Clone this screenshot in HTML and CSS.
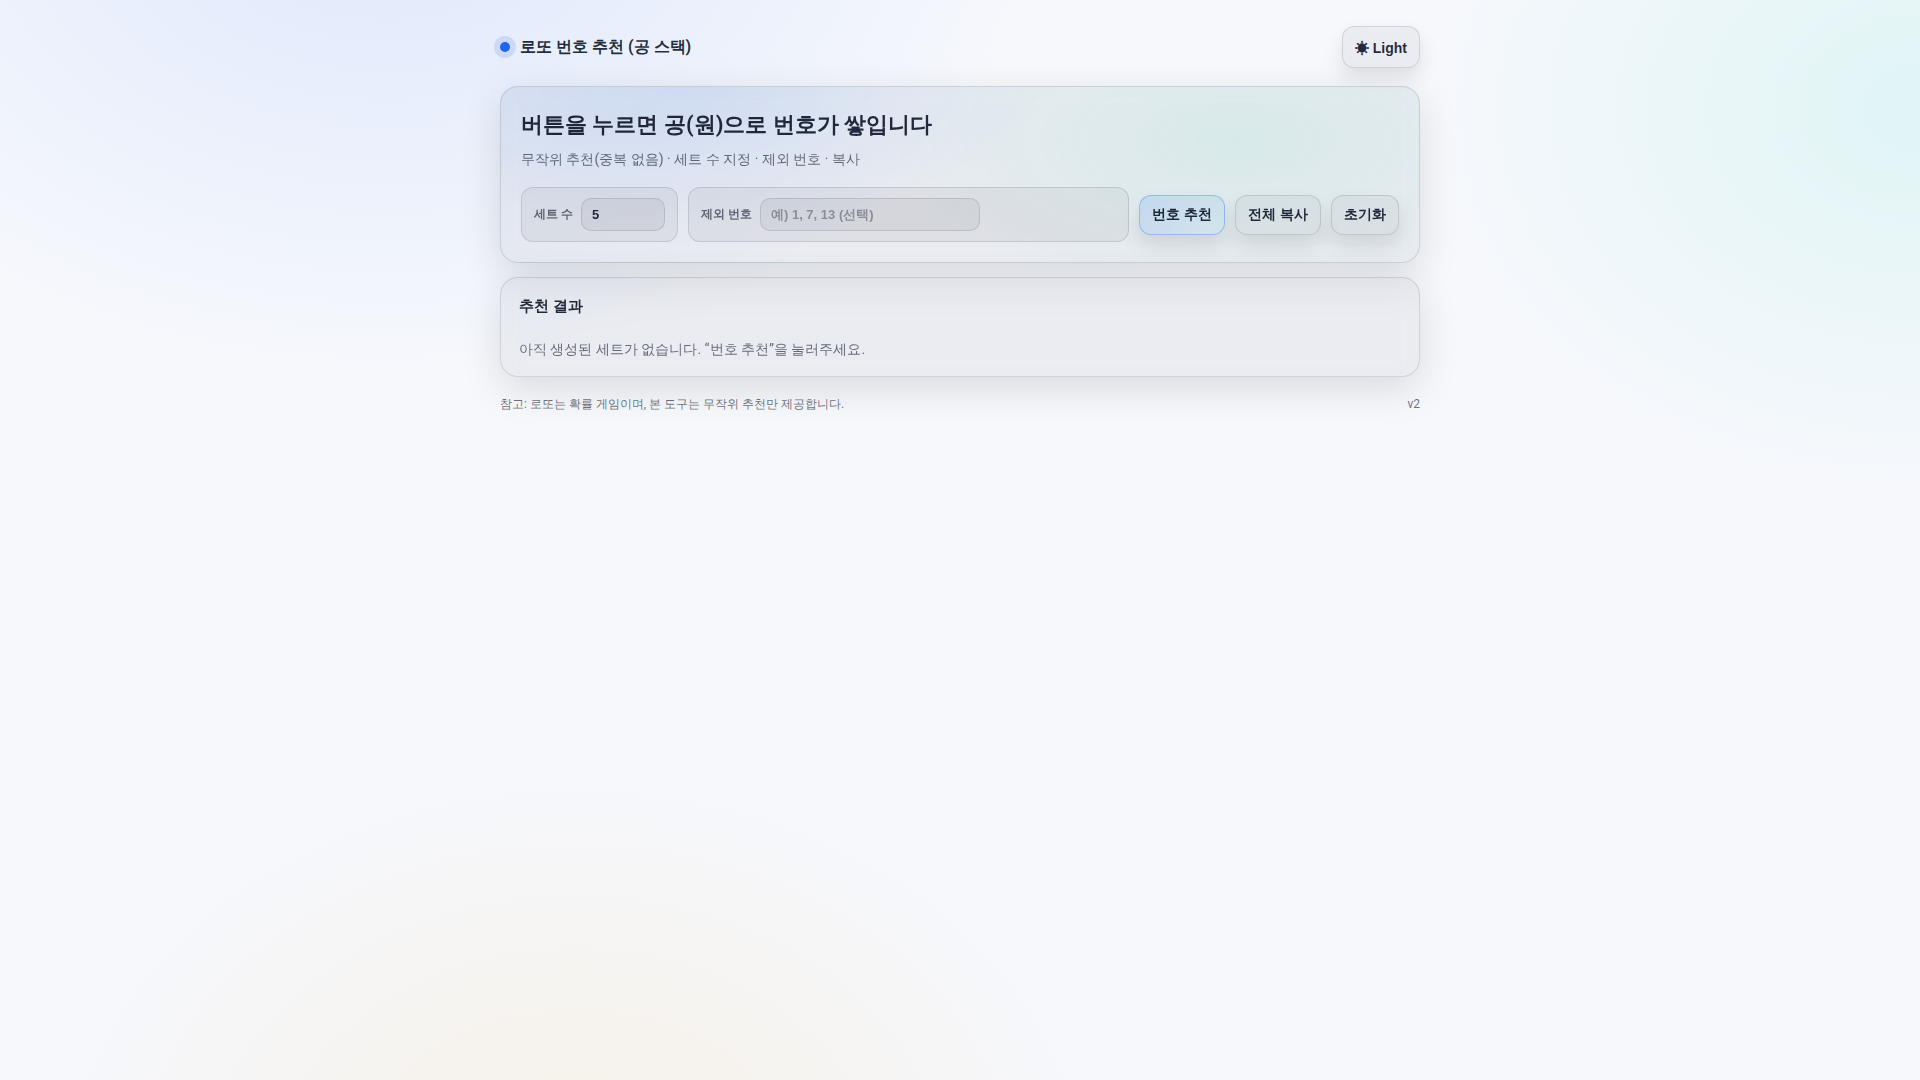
FILE: index.html
```html
<!DOCTYPE html>
<html lang="ko">
<head>
<meta charset="utf-8">
<meta name="viewport" content="width=device-width, initial-scale=1">
<title>로또 번호 추천 (공 스택)</title>
<link rel="stylesheet" href="styles.css">
</head>
<body>
<div class="wrap">
  <header class="topbar">
    <div class="brand"><span class="dot"></span><span>로또 번호 추천 (공 스택)</span></div>
    <button class="btn" type="button">☀ Light</button>
  </header>

  <main class="stack">
    <section class="card hero">
      <h1 class="title">버튼을 누르면 공(원)으로 번호가 쌓입니다</h1>
      <p class="sub">무작위 추천(중복 없음) · 세트 수 지정 · 제외 번호 · 복사</p>
      <div class="controls">
        <div class="field">
          <label class="label" for="count">세트 수</label>
          <input class="input input-count" id="count" type="text" inputmode="numeric" value="5">
        </div>
        <div class="field field-grow">
          <label class="label" for="exclude">제외 번호</label>
          <input class="input input-exclude" id="exclude" type="text" placeholder="예) 1, 7, 13 (선택)">
        </div>
        <button class="btn btn-primary" type="button">번호 추천</button>
        <button class="btn" type="button">전체 복사</button>
        <button class="btn" type="button">초기화</button>
      </div>
    </section>

    <section class="card results">
      <h2 class="results-title">추천 결과</h2>
      <p class="empty">아직 생성된 세트가 없습니다. “번호 추천”을 눌러주세요.</p>
    </section>
  </main>

  <footer class="footer">
    <span>참고: 로또는 확률 게임이며, 본 도구는 무작위 추천만 제공합니다.</span>
    <span>v2</span>
  </footer>
</div>
</body>
</html>
```
FILE: styles.css
```css
:root {
  --ink: rgba(15, 23, 42, 0.92);
  --muted: rgba(15, 23, 42, 0.62);
  --line: rgba(15, 23, 42, 0.12);
  --panel: rgba(15, 23, 42, 0.05);
  --accent: #2563eb;
}

* { box-sizing: border-box; }

body {
  margin: 0;
  min-height: 100vh;
  color: var(--ink);
  font-family: Roboto, sans-serif;
  background:
    radial-gradient(1100px 800px at 20% -10%, rgba(49, 110, 246, 0.12), transparent 60%),
    radial-gradient(900px 700px at 100% 10%, rgba(30, 215, 190, 0.10), transparent 55%),
    radial-gradient(900px 700px at 30% 110%, rgba(245, 158, 11, 0.09), transparent 60%),
    #f6f8fc;
}

.wrap {
  max-width: 960px;
  margin: 0 auto;
  padding: 26px 20px;
}

.topbar {
  display: flex;
  align-items: center;
  justify-content: space-between;
  margin-bottom: 18px;
}

.brand {
  display: flex;
  align-items: center;
  gap: 10px;
  font-size: 16px;
  font-weight: 700;
}

.dot {
  width: 10px;
  height: 10px;
  border-radius: 50%;
  background: var(--accent);
  box-shadow: 0 0 0 6px rgba(37, 99, 235, 0.14);
}

.stack {
  display: grid;
  gap: 14px;
}

.card {
  border: 1px solid var(--line);
  border-radius: 18px;
  background: var(--panel);
  box-shadow: 0 12px 40px rgba(0, 0, 0, 0.12);
  backdrop-filter: blur(10px);
}

.hero {
  padding: 20px;
  background:
    radial-gradient(600px 240px at 20% 0%, rgba(37, 125, 246, 0.10), transparent 60%),
    radial-gradient(600px 260px at 80% 30%, rgba(30, 205, 170, 0.09), transparent 60%),
    var(--panel);
}

.title {
  margin: 0 0 6px;
  font-size: 22px;
  line-height: 36px;
}

.sub {
  margin: 0 0 18px;
  font-size: 14px;
  line-height: 20px;
  color: var(--muted);
}

.controls {
  display: flex;
  flex-wrap: wrap;
  align-items: center;
  gap: 10px;
}

.field {
  display: flex;
  align-items: center;
  gap: 8px;
  padding: 10px 12px;
  border: 1px solid var(--line);
  border-radius: 12px;
  background: var(--panel);
}

.field-grow { flex: 1; }

.label {
  font-size: 12px;
  font-weight: 700;
  color: var(--muted);
}

.input {
  height: 33px;
  padding: 8px 10px;
  border: 1px solid var(--line);
  border-radius: 10px;
  outline: none;
  background: var(--panel);
  color: var(--ink);
  font: 700 13px "Liberation Sans", sans-serif;
}

.input::placeholder { color: rgba(15, 23, 42, 0.38); }

.input-count { width: 84px; }
.input-exclude { width: 220px; }

.btn {
  min-height: 40px;
  padding: 10px 12px;
  border: 1px solid var(--line);
  border-radius: 12px;
  background: var(--panel);
  box-shadow: 0 10px 20px rgba(0, 0, 0, 0.10);
  color: var(--ink);
  font: 700 14px "Liberation Sans", sans-serif;
  cursor: pointer;
}

.btn-primary {
  border-color: rgba(59, 130, 246, 0.40);
  background: linear-gradient(135deg, rgba(59, 130, 246, 0.18), rgba(30, 160, 200, 0.08));
}

.results { padding: 18px; }

.results-title {
  margin: 0 0 24px;
  font-size: 15px;
  line-height: 20px;
}

.empty {
  margin: 0;
  font-size: 14px;
  line-height: 18px;
  color: var(--muted);
}

.footer {
  display: flex;
  justify-content: space-between;
  margin-top: 18px;
  font-size: 12px;
  line-height: 18px;
  color: var(--muted);
}
```
